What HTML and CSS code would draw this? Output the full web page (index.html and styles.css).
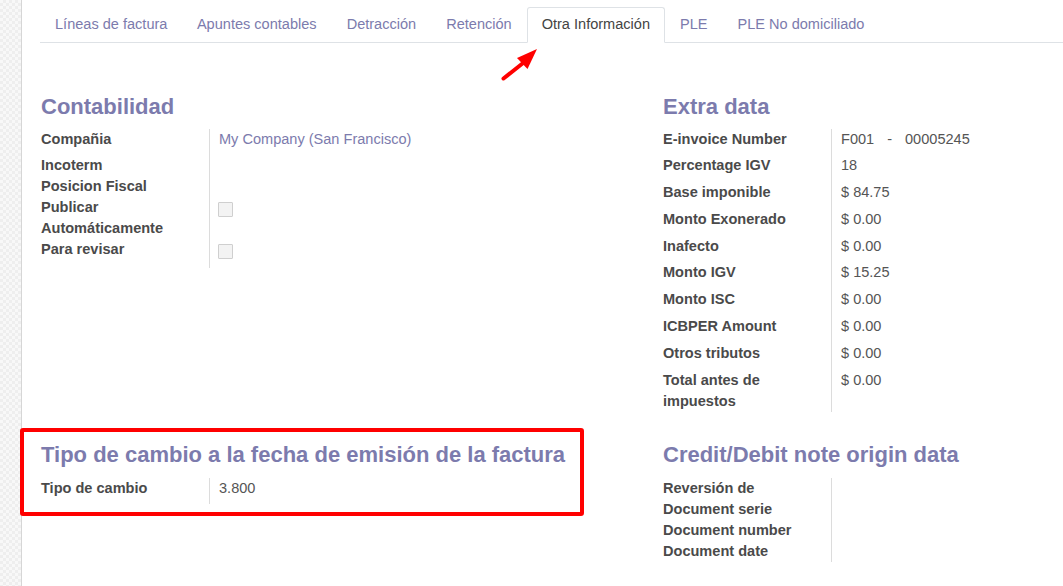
FILE: index.html
```html
<!DOCTYPE html>
<html lang="es">
<head>
<meta charset="utf-8">
<title>Otra Información</title>
<link rel="stylesheet" href="styles.css">
</head>
<body>
<div class="strip"></div>
<div class="main">
  <div class="sheet">
    <ul class="tabs">
      <li class="tab">Líneas de factura</li>
      <li class="tab">Apuntes contables</li>
      <li class="tab">Detracción</li>
      <li class="tab">Retención</li>
      <li class="tab active">Otra Información</li>
      <li class="tab">PLE</li>
      <li class="tab">PLE No domiciliado</li>
    </ul>

    <div class="grouprow first">
      <div class="col">
        <h2 class="sep">Contabilidad</h2>
        <div class="fields">
          <div class="row"><div class="lbl">Compañia</div><div class="val field"><span class="link">My Company (San Francisco)</span></div></div>
          <div class="row"><div class="lbl">Incoterm</div><div class="val"></div></div>
          <div class="row"><div class="lbl">Posicion Fiscal</div><div class="val"></div></div>
          <div class="row"><div class="lbl">Publicar Automáticamente</div><div class="val cbval"><span class="cb"></span></div></div>
          <div class="row"><div class="lbl">Para revisar</div><div class="val cbval"><span class="cb"></span></div></div>
        </div>
      </div>
      <div class="col">
        <h2 class="sep">Extra data</h2>
        <div class="fields">
          <div class="row"><div class="lbl">E-invoice Number</div><div class="val field">F001<span class="dash">-</span>00005245</div></div>
          <div class="row"><div class="lbl">Percentage IGV</div><div class="val field">18</div></div>
          <div class="row"><div class="lbl">Base imponible</div><div class="val field">$ 84.75</div></div>
          <div class="row"><div class="lbl">Monto Exonerado</div><div class="val field">$ 0.00</div></div>
          <div class="row"><div class="lbl">Inafecto</div><div class="val field">$ 0.00</div></div>
          <div class="row"><div class="lbl">Monto IGV</div><div class="val field">$ 15.25</div></div>
          <div class="row"><div class="lbl">Monto ISC</div><div class="val field">$ 0.00</div></div>
          <div class="row"><div class="lbl">ICBPER Amount</div><div class="val field">$ 0.00</div></div>
          <div class="row"><div class="lbl">Otros tributos</div><div class="val field">$ 0.00</div></div>
          <div class="row"><div class="lbl">Total antes de impuestos</div><div class="val field">$ 0.00</div></div>
        </div>
      </div>
    </div>

    <div class="grouprow second">
      <div class="col">
        <h2 class="sep">Tipo de cambio a la fecha de emisión de la factura</h2>
        <div class="fields">
          <div class="row"><div class="lbl">Tipo de cambio</div><div class="val field">3.800</div></div>
        </div>
      </div>
      <div class="col">
        <h2 class="sep">Credit/Debit note origin data</h2>
        <div class="fields">
          <div class="row"><div class="lbl">Reversión de</div><div class="val"></div></div>
          <div class="row"><div class="lbl">Document serie</div><div class="val"></div></div>
          <div class="row"><div class="lbl">Document number</div><div class="val"></div></div>
          <div class="row"><div class="lbl">Document date</div><div class="val"></div></div>
        </div>
      </div>
    </div>
  </div>
</div>

<div class="highlight"></div>
<svg class="arrow" width="60" height="50" viewBox="490 35 60 50" aria-hidden="true">
  <line x1="503.5" y1="78.5" x2="525" y2="61.5" stroke="#ff0000" stroke-width="4" stroke-linecap="round"/>
  <polygon points="537,49 517,58 527.5,69" fill="#ff0000"/>
</svg>
</body>
</html>
```

FILE: styles.css
```css
html, body {
  height: 100%;
}
body {
  margin: 0;
  display: flex;
  height: 586px;
  overflow: hidden;
  position: relative;
  background: #fff;
  font-family: "Liberation Sans", Arial, sans-serif;
  font-size: 14.56px;
  line-height: 21px;
  color: #4c4c4c;
}

.strip {
  width: 21px;
  flex: none;
  border-right: 1px solid #d6d6d6;
  background-color: #f6f6f6;
  background-image: conic-gradient(#eeeeee 25%, #f8f8f8 0 50%, #eeeeee 0 75%, #f8f8f8 0);
  background-size: 6px 6px;
}

.main {
  flex: 1;
  overflow: hidden;
}

.sheet {
  width: 1246px;
  padding: 7px 0 0 18px;
}

.tabs {
  list-style: none;
  margin: 0;
  padding: 0;
  display: flex;
  border-bottom: 1px solid #dee2e6;
}
.tab {
  padding: 6px 14px 7px;
  border: 1px solid transparent;
  margin-bottom: -1px;
  color: #7c7bad;
  white-space: nowrap;
}
.tab:first-child {
  padding-right: 13.5px;
}
.tab.active {
  border-color: #dee2e6 #dee2e6 #fff;
  border-radius: 3px 3px 0 0;
  background: #fff;
  color: #444;
}

.grouprow {
  display: grid;
  grid-template-columns: 622px 622px;
}
.grouprow.first {
  padding-top: 50.5px;
}
.grouprow.second {
  margin-top: 30px;
}
.grouprow.second .sep {
  margin-bottom: 10px;
}
.col {
  padding-left: 1px;
}

.sep {
  margin: 0 0 9px;
  font-size: 22px;
  line-height: 26px;
  font-weight: bold;
  color: #7c7bad;
  white-space: nowrap;
}

.row {
  display: flex;
}
.lbl {
  width: 169px;
  flex: none;
  box-sizing: border-box;
  padding-right: 16px;
  border-right: 1px solid #dcdcdc;
  font-weight: bold;
  color: #4a4a4a;
}
.val {
  padding-left: 9px;
  color: #555;
}
.val.field {
  padding-bottom: 5.8px;
}
.val.cbval {
  padding: 5px 0 9px 8px;
}
.link {
  color: #7c7bad;
}
.dash {
  margin: 0 13px;
}
.cb {
  display: block;
  width: 15px;
  height: 15px;
  box-sizing: border-box;
  border: 1px solid #cfcfcf;
  border-radius: 1px;
  background: #f3f3f3;
}

.highlight {
  position: absolute;
  left: 20px;
  top: 428px;
  width: 564px;
  height: 88px;
  box-sizing: border-box;
  border: 4px solid #ff0000;
  border-radius: 3px;
}
.arrow {
  position: absolute;
  left: 490px;
  top: 35px;
}
```
